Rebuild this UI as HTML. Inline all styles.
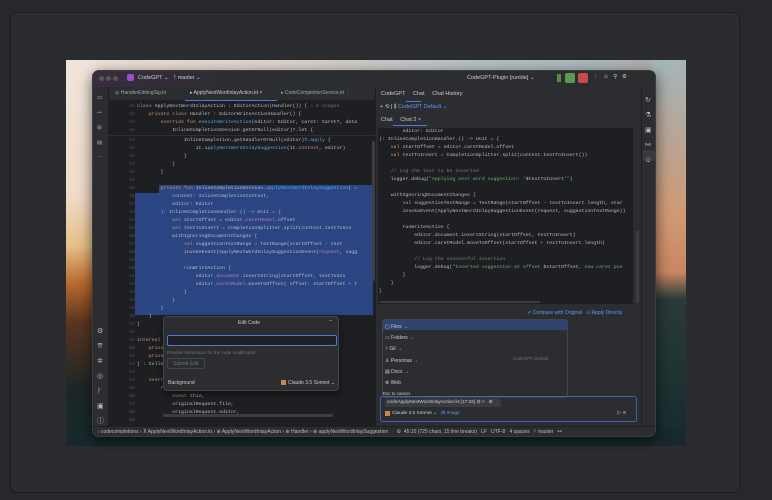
<!DOCTYPE html>
<html><head><meta charset="utf-8"><style>
*{margin:0;padding:0;box-sizing:border-box}
body{width:772px;height:500px;background:#27282c;position:relative;overflow:hidden;font-family:"Liberation Sans",sans-serif}
.a{position:absolute}
#panel{left:10px;top:12px;width:730px;height:481px;background:#2b2c30;border:1px solid #1c1d20;border-radius:7px}
#img{left:66px;top:60px;width:620px;height:386px;overflow:hidden;background:linear-gradient(90deg,#efe2da 0%,#ddd2cc 35%,#b7c0c2 65%,#a9b8bc 85%,#b6a89c 100%)}
.mono{font-family:"Liberation Mono",monospace;font-size:4.9px;white-space:pre;line-height:8px}
.t{font-size:5.5px;color:#c9ccd2;white-space:nowrap}
</style></head><body>
<div class="a" id="panel"></div>
<div class="a" id="img">
 <div class="a" style="left:0;top:0;width:30px;height:386px;background:linear-gradient(180deg,#f1e4dc 0%,#efdcc8 35%,#e8c08a 48%,#b8682e 58%,#5a3520 68%,#1e2626 85%,#162a2c 100%)"></div>
 <div class="a" style="left:585px;top:0;width:35px;height:386px;background:linear-gradient(180deg,#a4b6ba 0%,#b9a596 20%,#cf9a74 40%,#c98560 55%,#2a3a3a 62%,#172a2c 100%)"></div>
 <div class="a" style="left:0;top:370px;width:620px;height:16px;background:#17292c"></div>
</div>
<div class="a" style="left:92px;top:70px;width:564px;height:367px;background:#1e1f22;border-radius:7px;overflow:hidden;box-shadow:0 4px 14px rgba(0,0,0,.6);border:1px solid #3a3b3f">
 <div class="a" style="left:0;top:0;width:564px;height:16px;background:linear-gradient(90deg,#3a2c3e,#2b2d30 30%)"></div>
 <div class="a" style="left:6px;top:5px;width:5px;height:5px;border-radius:50%;background:#55565a"></div>
 <div class="a" style="left:13px;top:5px;width:5px;height:5px;border-radius:50%;background:#55565a"></div>
 <div class="a" style="left:20px;top:5px;width:5px;height:5px;border-radius:50%;background:#55565a"></div>
 <div class="a" style="left:34px;top:3px;width:7px;height:7px;border-radius:2px;background:#9b4fc7"></div>
 <div class="a t" style="left:45px;top:4px">CodeGPT ⌄</div>
 <div class="a t" style="left:80px;top:4px">ᚹ master ⌄</div>
 <div class="a t" style="left:374px;top:4px">CodeGPT-Plugin [runIde] ⌄</div>
 <div class="a" style="left:464px;top:3px;width:4px;height:8px;background:#5a8a3a"></div>
 <div class="a" style="left:472px;top:2px;width:10px;height:10px;background:#5a9a55;border-radius:2px"></div>
 <div class="a" style="left:485px;top:2px;width:10px;height:10px;background:#c84a4a;border-radius:2px"></div>
 <div class="a t" style="left:500px;top:3px">⋮ &nbsp; ☺ &nbsp; ⚲ &nbsp; ⚙</div>
 <div class="a" style="left:0;top:16px;width:16px;height:339px;background:#2b2d30;border-right:1px solid #1e1f22"></div>
 <div class="a t" style="left:4px;top:20px;line-height:15px;color:#aaa">▭<br>⊸<br>⊞<br>▤<br>⋯</div>
 <div class="a t" style="left:4px;top:253px;line-height:15px;color:#bbb;font-size:7px">⚙<br>⇈<br>✲<br>◎<br>ᚹ<br>▣<br>ⓘ</div>
 <div class="a" style="left:16px;top:16px;width:266px;height:14px;background:#2b2d30;border-bottom:1px solid #1e1f22"></div>
 <div class="a t" style="left:22px;top:19px;color:#9aa;font-size:5px">◎ HandlerEditingSig.kt</div>
 <div class="a t" style="left:97px;top:19px;font-size:5px">▸ ApplyNextWordInlayAction.kt ×</div>
 <div class="a" style="left:92px;top:29px;width:92px;height:1px;background:#4a7bd8"></div>
 <div class="a t" style="left:188px;top:19px;color:#9aa;font-size:5px">▸ CodeCompletionService.kt ⋮</div>
 <div class="a" style="left:16px;top:31px;width:266px;height:34px;background:#1e1f22;border-bottom:1px solid #2f3034"></div>
 <div class="a mono" style="left:18px;top:32px;color:#4e5157;width:24px;text-align:right">31
32
33
34</div>
 <div class="a mono" style="left:18px;top:66px;color:#4e5157;width:24px;text-align:right">24
25
26
27
28
29
30
31
32
33
34
35
36
37
38
39
40
41
42
43
44
45
46
47
48
49
50
51
52
53
54
55
56
57
58
59</div>
 <div class="a" style="left:66px;top:114px;width:214px;height:130px;background:#2b4582"></div>
 <div class="a" style="left:42px;top:122px;width:24px;height:122px;background:#2b4582"></div>
 <div class="a mono" style="left:44px;top:32px;color:#bcbec4"><span style="color:#cf8e6d">class</span> ApplyNextWordInlayAction : EditorAction(Handler()) { <span style="color:#6f737a">⚠ 2 usages</span>
    <span style="color:#cf8e6d">private class</span> Handler : EditorWriteActionHandler() {
        <span style="color:#cf8e6d">override fun</span> <span style="color:#56a8f5">executeWriteAction</span>(editor: Editor, caret: Caret?, data
            InlineCompletionSession.getOrNull(editor)?.let {</div>
 <div class="a mono" style="left:44px;top:66px;color:#bcbec4">                InlineCompletion.getHandlerOrNull(editor)?.<span style="color:#56a8f5">apply</span> {
                    it.<span style="color:#56a8f5">applyNextWordInlaySuggestion</span>(it.<span style="color:#c77dbb">context</span>, editor)
                }
            }
        }

        <span style="color:#cf8e6d">private fun</span> InlineCompletionSession.<span style="color:#56a8f5">applyNextWordInlaySuggestion</span>( ⚠
            context: InlineCompletionContext,
            editor: Editor
        ): InlineCompletionHandler.() -> Unit = {
            <span style="color:#cf8e6d">val</span> startOffset = editor.<span style="color:#c77dbb">caretModel</span>.offset
            <span style="color:#cf8e6d">val</span> textToInsert = CompletionSplitter.split(context.textToIns
            withIgnoringDocumentChanges {
                <span style="color:#cf8e6d">val</span> suggestionTextRange = TextRange(startOffset - text
                invokeEvent(ApplyNextWordInlaySuggestionEvent(<span style="color:#c77dbb">request</span>, sugg

                runWriteAction {
                    editor.<span style="color:#c77dbb">document</span>.insertString(startOffset, textToIns
                    editor.<span style="color:#c77dbb">caretModel</span>.moveToOffset( offset: startOffset + t
                }
            }
        }
    }
}

<span style="color:#cf8e6d">internal</span>
    <span style="color:#cf8e6d">priva</span>
    <span style="color:#cf8e6d">priva</span>
} : Colle

    <span style="color:#cf8e6d">overr</span>
        <span style="color:#cf8e6d">return</span> InlineCompletionRequest(
            <span style="color:#cf8e6d">event</span> this,
            originalRequest.file,
            originalRequest.editor,</div>
 <div class="a" style="left:279px;top:70px;width:3px;height:140px;background:#3c3e42;border-radius:2px"></div>
 <div class="a" style="left:70px;top:343px;width:170px;height:3px;background:#3c3e42;border-radius:2px"></div>
 <div class="a" style="left:70px;top:245px;width:176px;height:75px;background:#2b2d30;border:1px solid #43454a;border-radius:4px;box-shadow:0 3px 8px rgba(0,0,0,.5)"></div>
 <div class="a t" style="left:145px;top:249px;font-size:5px">Edit Code</div>
 <div class="a t" style="left:236px;top:247px">–</div>
 <div class="a" style="left:74px;top:264px;width:170px;height:11px;border:1px solid #4a7bd8;border-radius:2px;background:#1f2023"></div>
 <div class="a t" style="left:74px;top:279px;color:#6f737a;font-size:4.5px">Provide instructions for the code modification</div>
 <div class="a" style="left:74px;top:287px;width:38px;height:11px;border:1px solid #43454a;border-radius:2px"></div>
 <div class="a t" style="left:80px;top:290px;color:#6f737a;font-size:5px">Submit Edit</div>
 <div class="a t" style="left:75px;top:309px;font-size:5px">Background</div>
 <div class="a" style="left:188px;top:309px;width:5px;height:5px;background:#c8864e"></div>
 <div class="a t" style="left:195px;top:309px;font-size:5px">Claude 3.5 Sonnet ⌄</div>
 <div class="a" style="left:282px;top:16px;width:266px;height:339px;background:#2b2d30;border-left:1px solid #1e1f22"></div>
 <div class="a t" style="left:288px;top:20px">CodeGPT &nbsp;&nbsp;&nbsp; Chat &nbsp;&nbsp;&nbsp; Chat History</div>
 <div class="a" style="left:313px;top:30px;width:15px;height:1px;background:#4a7bd8"></div>
 <div class="a t" style="left:287px;top:33px">+ ⟲ | ⫼ <span style="color:#589df6">CodeGPT Default ⌄</span></div>
 <div class="a t" style="left:288px;top:46px">Chat &nbsp;&nbsp;&nbsp; Chat 2 ×</div>
 <div class="a" style="left:300px;top:54px;width:34px;height:1px;background:#4a7bd8"></div>
 <div class="a" style="left:285px;top:57px;width:255px;height:176px;background:#1e1f22;overflow:hidden">
 <div class="a mono" style="left:1px;top:0;color:#bcbec4">        editor: Editor
): InlineCompletionHandler.() -> Unit = {
    <span style="color:#cf8e6d">val</span> startOffset = editor.caretModel.offset
    <span style="color:#cf8e6d">val</span> textToInsert = CompletionSplitter.split(context.textToInsert())

    <span style="color:#7a7e85">// Log the text to be inserted</span>
    logger.debug(<span style="color:#6aab73">"Applying next word suggestion: '</span>$textToInsert<span style="color:#6aab73">'"</span>)

    withIgnoringDocumentChanges {
        <span style="color:#cf8e6d">val</span> suggestionTextRange = TextRange(startOffset - textToInsert.length, star
        invokeEvent(ApplyNextWordInlaySuggestionEvent(request, suggestionTextRange))

        runWriteAction {
            editor.document.insertString(startOffset, textToInsert)
            editor.caretModel.moveToOffset(startOffset + textToInsert.length)

            <span style="color:#7a7e85">// Log the successful insertion</span>
            logger.debug(<span style="color:#6aab73">"Inserted suggestion at offset </span>$startOffset<span style="color:#6aab73">, new caret pos</span>
        }
    }
}</div></div>
 <div class="a" style="left:287px;top:230px;width:160px;height:2px;background:#3c3e42"></div>
 <div class="a" style="left:543px;top:160px;width:3px;height:72px;background:#3c3e42"></div>
 <div class="a t" style="left:434px;top:239px;color:#589df6;font-size:5px">⇗ Compare with Original &nbsp; ☑ Apply Directly</div>
 <div class="a" style="left:289px;top:248px;width:186px;height:79px;background:#2b2d30;border:1px solid #43454a;border-radius:3px"></div>
 <div class="a" style="left:290px;top:249px;width:184px;height:10px;background:#2e436e"></div>
 <div class="a t" style="left:292px;top:251px;font-size:5px;line-height:11.2px">▢ Files →<br>▭ Folders →<br>ᚹ Git →<br>♙ Personas →<br>▤ Docs →<br>⊕ Web</div>
 <div class="a t" style="left:420px;top:285px;color:#6f737a;font-size:4.5px">CodeGPT Default</div>
 <div class="a t" style="left:290px;top:320px;font-size:4.5px">Esc to cancel</div>
 <div class="a" style="left:287px;top:325px;width:257px;height:26px;border:1px solid #3f63b8;border-radius:3px"></div>
 <div class="a" style="left:292px;top:328px;width:116px;height:8px;background:#3a3c40;border-radius:2px"></div>
 <div class="a t" style="left:294px;top:329px;font-size:4.8px">codeApplyNextWordInlayAction.kt [17:32] ⊘ × &nbsp; ⊕</div>
 <div class="a" style="left:292px;top:340px;width:5px;height:5px;background:#c8864e"></div>
 <div class="a t" style="left:299px;top:340px;font-size:4.8px">Claude 3.5 Sonnet ⌄ &nbsp; <span style="color:#589df6">⊞ Image</span></div>
 <div class="a t" style="left:524px;top:339px">▷ <span style="color:#777">■</span></div>
 <div class="a" style="left:548px;top:16px;width:16px;height:339px;background:#2b2d30;border-left:1px solid #1e1f22"></div>
 <div class="a t" style="left:552px;top:22px;line-height:15px;color:#bbb;font-size:7px">↻<br>⚗<br>▣<br>⚯<br>⚙</div>
 <div class="a" style="left:550px;top:79px;width:12px;height:11px;background:#43454a;border-radius:2px;opacity:.6"></div>
 <div class="a" style="left:0;top:355px;width:564px;height:12px;background:#2b2d30;border-top:1px solid #1e1f22"></div>
 <div class="a t" style="left:5px;top:358px;font-size:5px;color:#bbb">› codecompletions › ⊼ ApplyNextWordInlayAction.kt › ⊕ ApplyNextWordInlayAction › ⊕ Handler › ⊕ applyNextWordInlaySuggestion &nbsp;&nbsp;&nbsp;&nbsp; ⚙ &nbsp;45:10 (725 chars, 15 line breaks) &nbsp; LF &nbsp; UTF-8 &nbsp; 4 spaces &nbsp; ᚹ master &nbsp; ⚯</div>
</div>
</body></html>
